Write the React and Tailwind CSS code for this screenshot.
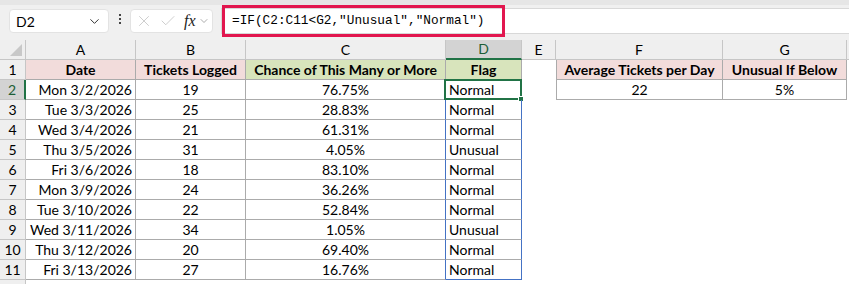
import { ChevronDown, X, Check } from "lucide-react";

const rows = [
  ["Mon 3/2/2026", 19, "76.75%", "Normal"],
  ["Tue 3/3/2026", 25, "28.83%", "Normal"],
  ["Wed 3/4/2026", 21, "61.31%", "Normal"],
  ["Thu 3/5/2026", 31, "4.05%", "Unusual"],
  ["Fri 3/6/2026", 18, "83.10%", "Normal"],
  ["Mon 3/9/2026", 24, "36.26%", "Normal"],
  ["Tue 3/10/2026", 22, "52.84%", "Normal"],
  ["Wed 3/11/2026", 34, "1.05%", "Unusual"],
  ["Thu 3/12/2026", 20, "69.40%", "Normal"],
  ["Fri 3/13/2026", 27, "16.76%", "Normal"],
];

const cols = ["A", "B", "C", "D", "E", "F", "G"];

const App = () => {
  return (
    <div
      className="w-[849px] h-[284px] overflow-hidden bg-white text-black"
      style={{ fontFamily: "Lato, 'Noto Sans', sans-serif" }}
    >
      {/* ── Formula bar ── */}
      <div className="h-[40px] bg-[#f0f0f0] border-t-[5px] border-[#e6e6e6] flex items-start relative">
        <div className="mt-[4px] ml-[9px] w-[100px] h-[24px] bg-white rounded-[4px] border border-[#e3e3e3] flex items-center justify-between pl-[6px] pr-[6px] text-[14px]">
          <span>D2</span>
          <ChevronDown size={15} strokeWidth={1.6} className="text-[#333]" />
        </div>
        <div className="mt-[9px] ml-[10px] flex flex-col gap-[2px]">
          <div className="w-[2px] h-[2px] bg-[#444]" />
          <div className="w-[2px] h-[2px] bg-[#444]" />
          <div className="w-[2px] h-[2px] bg-[#444]" />
        </div>
        <div className="mt-[4px] ml-[9px] w-[83px] h-[24px] bg-white rounded-[4px] border border-[#e3e3e3] flex items-center pl-[4px]">
          <X size={18} strokeWidth={1.1} className="text-[#c4c4c4]" />
          <Check size={18} strokeWidth={1.1} className="text-[#c4c4c4] ml-[6px]" />
          <span
            className="italic text-[16px] text-[#222] ml-[7px]"
            style={{ fontFamily: "'Liberation Serif', serif" }}
          >
            fx
          </span>
          <ChevronDown size={12} strokeWidth={1.4} className="text-[#888] ml-[2px]" />
        </div>
        <div className="mt-[3px] ml-[8px] flex-1 h-[26px] bg-white border-y border-l border-[#d8d8d8] flex items-center">
          <span
            className="ml-[10px] text-[12.75px] text-black whitespace-pre"
            style={{ fontFamily: "'Liberation Mono', monospace" }}
          >
            {'=IF(C2:C11<G2,"Unusual","Normal")'}
          </span>
        </div>
        {/* annotation box */}
        <div className="absolute left-[222px] top-[0px] w-[283px] h-[32px] border-[3px] border-[#e2174f]" />
      </div>

      {/* ── Grid ── */}
      <div className="grid grid-cols-[26px_110px_110px_200px_76px_34px_167px_124px_2px] text-[14px] leading-none">
        {/* column headers */}
        <div className="h-[20px] bg-[#efefef] border-r border-b border-[#c6c6c6] relative">
          <div className="absolute right-[3px] bottom-[3px] w-0 h-0 border-l-[12px] border-l-transparent border-b-[12px] border-b-[#c8c8c8]" />
        </div>
        {cols.map((c) =>
          c === "D" ? (
            <div
              key={c}
              className="h-[20px] bg-[#d3d3d3] border-r border-[#c6c6c6] border-b-2 border-b-[#217346] flex items-center justify-center text-[#1d5e36]"
            >
              {c}
            </div>
          ) : (
            <div
              key={c}
              className="h-[20px] bg-[#efefef] border-r border-b border-[#c6c6c6] flex items-center justify-center"
            >
              {c}
            </div>
          )
        )}
        <div className="h-[20px] bg-[#efefef] border-b border-[#c6c6c6]" />

        {/* row 1 */}
        <div className="h-[20px] bg-[#efefef] border-r border-b border-[#c6c6c6] flex items-center justify-center">1</div>
        <div className="h-[20px] bg-[#f2dcdb] border-r border-b border-[#ababab] flex items-center justify-center font-bold">Date</div>
        <div className="h-[20px] bg-[#f2dcdb] border-r border-b border-[#ababab] flex items-center justify-center font-bold">Tickets Logged</div>
        <div className="h-[20px] bg-[#d8e4bc] border-r border-b border-[#ababab] flex items-center justify-center font-bold">Chance of This Many or More</div>
        <div className="h-[20px] bg-[#d8e4bc] border-r border-b border-[#ababab] flex items-center justify-center font-bold">Flag</div>
        <div className="h-[20px]" />
        <div className="h-[20px] bg-[#f2dcdb] border-l border-r border-b border-[#ababab] flex items-center justify-center font-bold">Average Tickets per Day</div>
        <div className="h-[20px] bg-[#f2dcdb] border-r border-b border-[#ababab] flex items-center justify-center font-bold">Unusual If Below</div>
        <div className="h-[20px]" />

        {/* data rows */}
        {rows.map((r, i) => {
          const n = i + 2;
          const sel = n === 2;
          const last = n === 11;
          return [
            <div
              key={`h${n}`}
              className={
                sel
                  ? "h-[20px] bg-[#d3d3d3] border-b border-[#c6c6c6] border-r-2 border-r-[#217346] flex items-center justify-center text-[#1d5e36]"
                  : "h-[20px] bg-[#efefef] border-r border-b border-[#c6c6c6] flex items-center justify-center"
              }
            >
              {n}
            </div>,
            <div key={`a${n}`} className="h-[20px] border-r border-b border-[#ababab] flex items-center justify-end pr-[3px]">
              {r[0]}
            </div>,
            <div key={`b${n}`} className="h-[20px] border-r border-b border-[#ababab] flex items-center justify-center">
              {r[1]}
            </div>,
            <div key={`c${n}`} className="h-[20px] border-r border-b border-[#ababab] border-r-[#4472c4] flex items-center justify-center">
              {r[2]}
            </div>,
            <div
              key={`d${n}`}
              className={
                last
                  ? "h-[20px] border-r border-b border-[#4472c4] flex items-center pl-[3px] relative"
                  : "h-[20px] border-r border-b border-[#ababab] border-r-[#4472c4] flex items-center pl-[3px] relative"
              }
            >
              {r[3]}
              {sel && (
                <div className="absolute -left-[2px] -top-[1px] -right-[1px] -bottom-[1px] border-2 border-[#217346]">
                  <div className="absolute -right-[4px] -bottom-[4px] w-[6px] h-[6px] bg-[#217346] border border-white" />
                </div>
              )}
            </div>,
            <div key={`e${n}`} className="h-[20px]" />,
            sel ? (
              <div key={`f${n}`} className="h-[20px] border-l border-r border-b border-[#ababab] flex items-center justify-center">
                22
              </div>
            ) : (
              <div key={`f${n}`} className="h-[20px]" />
            ),
            sel ? (
              <div key={`g${n}`} className="h-[20px] border-r border-b border-[#ababab] flex items-center justify-center">
                5%
              </div>
            ) : (
              <div key={`g${n}`} className="h-[20px]" />
            ),
            <div key={`x${n}`} className="h-[20px]" />,
          ];
        })}

        {/* row 12 peek */}
        <div className="h-[20px] bg-[#efefef] border-r border-[#c6c6c6]" />
      </div>
    </div>
  );
};

export default App;
